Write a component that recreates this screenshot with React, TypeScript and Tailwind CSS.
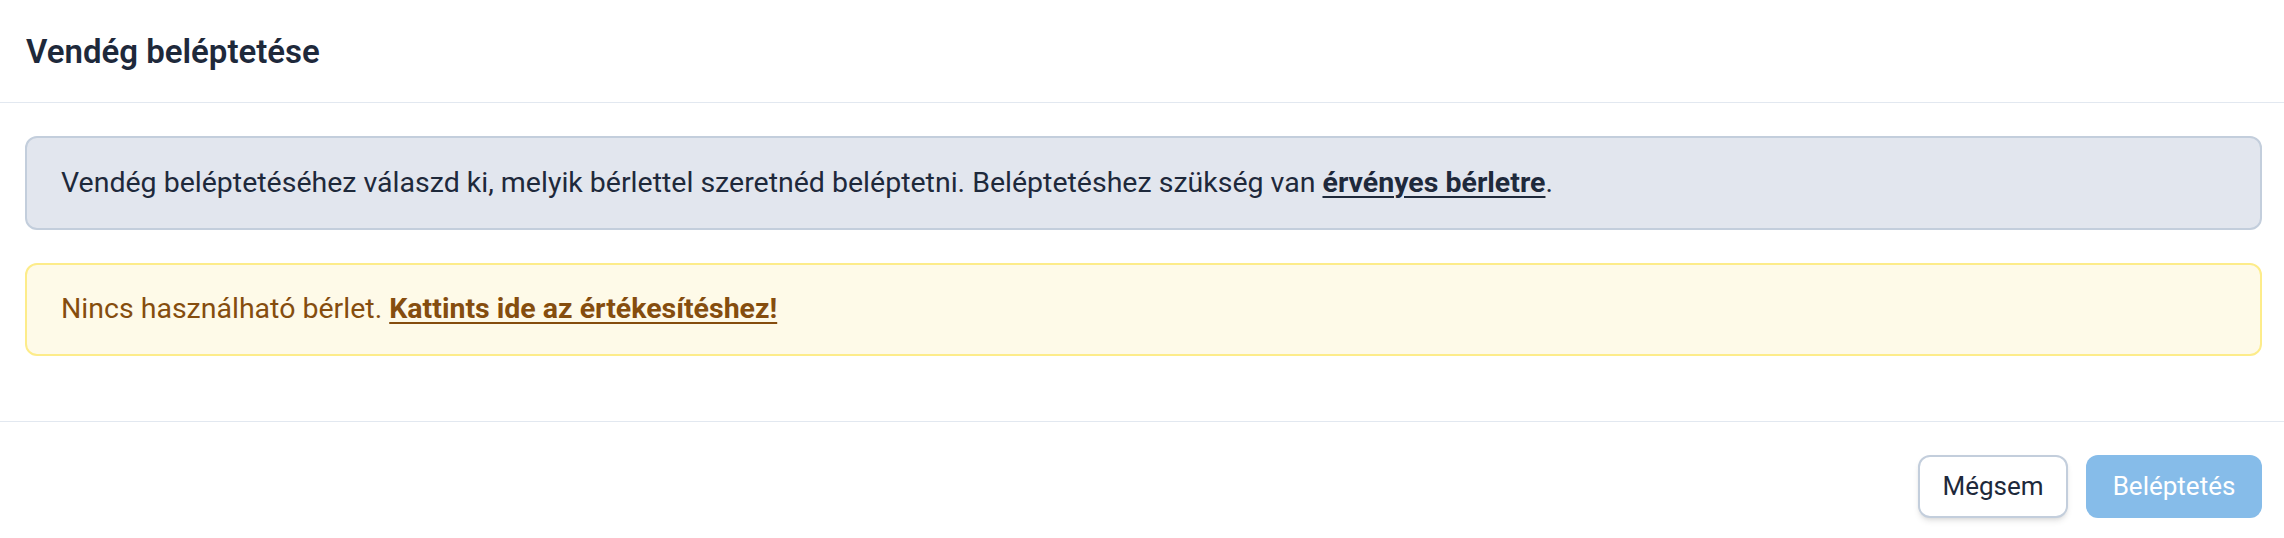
export default function App() {
  return (
    <div className="w-full bg-white text-[#1e293b]" style={{ fontFamily: "Roboto, 'Liberation Sans', sans-serif" }}>
      {/* === HEADER === */}
      <div className="flex h-[103px] items-center border-b border-[#e2e8f0] pl-[26px] pr-[22px]">
        <h2 className="text-[33px] font-semibold leading-none text-[#1e293b]">Vendég beléptetése</h2>
      </div>

      {/* === BODY === */}
      <div className="flex flex-col gap-[33px] pt-[33px] pb-[65px] pl-[25px] pr-[22px]">
        <div className="flex h-[94px] items-center rounded-[12px] border-2 border-[#c3cedc] bg-[#e2e6ee] px-[34px] text-[28.5px] text-[#1e293b]">
          <p>
            Vendég beléptetéséhez válaszd ki, melyik bérlettel szeretnéd beléptetni. Beléptetéshez szükség van{" "}
            <a href="#" className="font-bold underline decoration-2 underline-offset-[4px]">érvényes bérletre</a>.
          </p>
        </div>

        <div className="flex h-[93px] items-center rounded-[12px] border-2 border-[#fdec8a] bg-[#fefae8] px-[34px] text-[28.5px] text-[#854d0e]">
          <p>
            Nincs használható bérlet.{" "}
            <a href="#" className="font-bold underline decoration-2 underline-offset-[4px]">Kattints ide az értékesítéshez!</a>
          </p>
        </div>
      </div>

      {/* === FOOTER === */}
      <div className="flex justify-end gap-[18px] border-t border-[#e2e8f0] pt-[33px] pb-[21px] pl-[25px] pr-[22px]">
        <button className="h-[63px] w-[150px] rounded-[12px] border-2 border-[#c3cedc] bg-white text-[26px] font-normal text-[#1e293b] shadow-md">
          Mégsem
        </button>
        <button disabled className="h-[63px] w-[176px] rounded-[12px] bg-[#86bce9] text-[26px] font-normal text-white">
          Beléptetés
        </button>
      </div>
    </div>
  );
}
